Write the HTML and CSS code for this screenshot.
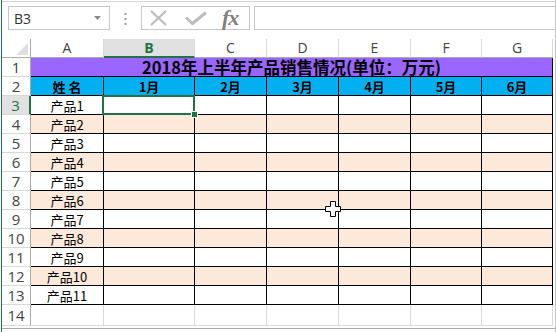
FILE: index.html
```html
<!DOCTYPE html>
<html lang="zh-CN">
<head>
  <meta charset="UTF-8">
  <title>2018年上半年产品销售情况</title>
  <link rel="stylesheet" href="styles.css">
</head>
<body>
  <div class="excel">
    <div class="formula-bar">
      <div class="name-box">
        <span>B3</span>
        <svg class="drop" width="7" height="4" viewBox="0 0 7 4"><path d="M0 0H7L3.5 4Z" fill="#8a8a8a"/></svg>
      </div>
      <svg class="dots" width="3" height="12" viewBox="0 0 3 12">
        <rect x="0.5" y="0" width="2" height="2" fill="#9a9a9a"/>
        <rect x="0.5" y="5" width="2" height="2" fill="#9a9a9a"/>
        <rect x="0.5" y="10" width="2" height="2" fill="#9a9a9a"/>
      </svg>
      <div class="fx-box">
        <svg width="18" height="16" viewBox="0 0 18 16"><path d="M1 1L16 15M16 1L1 15" stroke="#bcbcbc" stroke-width="2.2" fill="none"/></svg>
        <svg width="22" height="14" viewBox="0 0 22 14"><path d="M1 6.5L7.5 12.5L21 1.5" stroke="#bcbcbc" stroke-width="3" fill="none"/></svg>
        <span class="fx">fx</span>
      </div>
      <div class="input-box"></div>
    </div>

    <div class="grid">
      <div class="ch corner"><span class="tri"></span></div>
      <div class="ch">A</div>
      <div class="ch on">B</div>
      <div class="ch">C</div>
      <div class="ch">D</div>
      <div class="ch">E</div>
      <div class="ch">F</div>
      <div class="ch">G</div>

      <div class="rh">1</div>
      <div class="cell title">2018年上半年产品销售情况(单位：万元)</div>

      <div class="rh">2</div>
      <div class="cell head">姓 名</div>
      <div class="cell head">1月</div>
      <div class="cell head">2月</div>
      <div class="cell head">3月</div>
      <div class="cell head">4月</div>
      <div class="cell head">5月</div>
      <div class="cell head">6月</div>

      <div class="rh on">3</div>
      <div class="cell">产品1</div>
      <div class="cell active"><span class="handle"></span></div>
      <div class="cell"></div><div class="cell"></div><div class="cell"></div><div class="cell"></div><div class="cell"></div>

      <div class="rh">4</div>
      <div class="cell peach">产品2</div>
      <div class="cell peach"></div><div class="cell peach"></div><div class="cell peach"></div><div class="cell peach"></div><div class="cell peach"></div><div class="cell peach"></div>

      <div class="rh">5</div>
      <div class="cell">产品3</div>
      <div class="cell"></div><div class="cell"></div><div class="cell"></div><div class="cell"></div><div class="cell"></div><div class="cell"></div>

      <div class="rh">6</div>
      <div class="cell peach">产品4</div>
      <div class="cell peach"></div><div class="cell peach"></div><div class="cell peach"></div><div class="cell peach"></div><div class="cell peach"></div><div class="cell peach"></div>

      <div class="rh">7</div>
      <div class="cell">产品5</div>
      <div class="cell"></div><div class="cell"></div><div class="cell"></div><div class="cell"></div><div class="cell"></div><div class="cell"></div>

      <div class="rh">8</div>
      <div class="cell peach">产品6</div>
      <div class="cell peach"></div><div class="cell peach"></div><div class="cell peach"></div><div class="cell peach"></div><div class="cell peach"></div><div class="cell peach"></div>

      <div class="rh">9</div>
      <div class="cell">产品7</div>
      <div class="cell"></div><div class="cell"></div><div class="cell"></div><div class="cell"></div><div class="cell"></div><div class="cell"></div>

      <div class="rh">10</div>
      <div class="cell peach">产品8</div>
      <div class="cell peach"></div><div class="cell peach"></div><div class="cell peach"></div><div class="cell peach"></div><div class="cell peach"></div><div class="cell peach"></div>

      <div class="rh">11</div>
      <div class="cell">产品9</div>
      <div class="cell"></div><div class="cell"></div><div class="cell"></div><div class="cell"></div><div class="cell"></div><div class="cell"></div>

      <div class="rh">12</div>
      <div class="cell peach">产品10</div>
      <div class="cell peach"></div><div class="cell peach"></div><div class="cell peach"></div><div class="cell peach"></div><div class="cell peach"></div><div class="cell peach"></div>

      <div class="rh">13</div>
      <div class="cell">产品11</div>
      <div class="cell"></div><div class="cell"></div><div class="cell"></div><div class="cell"></div><div class="cell"></div><div class="cell"></div>

      <div class="rh last">14</div>
      <div class="cell empty"></div><div class="cell empty"></div><div class="cell empty"></div><div class="cell empty"></div><div class="cell empty"></div><div class="cell empty"></div><div class="cell empty"></div>
    </div>

    <div class="footer"></div>

    <svg class="cursor" width="16" height="16" viewBox="0 0 16 16">
      <path d="M5.5 0.5H10.5V5.5H15.5V10.5H10.5V15.5H5.5V10.5H0.5V5.5H5.5Z" fill="#fff" stroke="#000" stroke-width="1"/>
    </svg>
  </div>
</body>
</html>
```

FILE: styles.css
```css
body {
  margin: 0;
  background: #fff;
}
.excel {
  position: relative;
  box-sizing: border-box;
  width: 555px;
  height: 332px;
  margin-left: 1px;
  border-left: 1px solid #217346;
  border-right: 1px solid #c6c6c6;
  overflow: hidden;
  font-family: "Open Sans", "Liberation Sans", sans-serif;
}
.formula-bar {
  box-sizing: border-box;
  height: 38px;
  margin-top: 1px;
  border-top: 1px solid #d5d5d5;
  padding-top: 4px;
  display: flex;
  align-items: flex-start;
}
.name-box {
  box-sizing: border-box;
  width: 102px;
  height: 24px;
  margin-left: 6px;
  border: 1px solid #c6c6c6;
  display: flex;
  align-items: center;
  justify-content: space-between;
  padding: 0 8px 0 5px;
  font-size: 14px;
  color: #333;
}
.dots {
  margin: 7px 0 0 14px;
}
.fx-box {
  box-sizing: border-box;
  width: 109px;
  height: 24px;
  margin-left: 14px;
  border: 1px solid #c6c6c6;
  display: flex;
  align-items: center;
  padding-left: 8px;
}
.fx-box svg:nth-child(2) {
  margin-left: 17px;
}
.fx {
  margin-left: 15px;
  font-family: "Liberation Serif", serif;
  font-style: italic;
  font-weight: bold;
  font-size: 22px;
  color: #808080;
  line-height: 20px;
  letter-spacing: -1px;
}
.input-box {
  flex: 1;
  box-sizing: border-box;
  height: 24px;
  margin-left: 4px;
  border: 1px solid #c6c6c6;
  border-right: none;
}
.grid {
  display: grid;
  grid-template-columns: 29px 73px 91px 72px 72px 72px 71px 71px;
  grid-template-rows: 19px repeat(13, 19px) 21px;
}
.ch, .rh, .cell {
  box-sizing: border-box;
  display: flex;
  align-items: center;
  justify-content: center;
}
.ch {
  border-right: 1px solid #d9d9d9;
  border-bottom: 1px solid #ababab;
  font-size: 14px;
  line-height: 16px;
  color: #444;
}
.ch.on {
  background: #e1e1e1;
  border-bottom: 2px solid #217346;
  color: #217346;
  font-weight: bold;
}
.corner {
  position: relative;
  border-right: 1px solid #ababab;
}
.tri {
  position: absolute;
  right: 2px;
  bottom: 2px;
  width: 0;
  height: 0;
  border-left: 12px solid transparent;
  border-bottom: 12px solid #dfdfdf;
}
.rh {
  border-right: 1px solid #ababab;
  border-bottom: 1px solid #d9d9d9;
  font-size: 15px;
  line-height: 17px;
  color: #444;
}
.rh.on {
  background: #e1e1e1;
  border-right: 2px solid #217346;
  color: #217346;
}
.cell {
  border-right: 1px solid #000;
  border-bottom: 1px solid #000;
  font-family: "Noto Sans CJK SC", sans-serif;
  font-size: 13px;
  color: #000;
  line-height: 17px;
}
.title {
  grid-column: 2 / 9;
  background: #9966ff;
  font-size: 16.5px;
  font-weight: bold;
}
.head {
  background: #00b0f0;
  font-weight: bold;
}
.peach {
  background: #fde9d9;
}
.empty {
  border-right: 1px solid #d9d9d9;
  border-bottom: 1px solid #d9d9d9;
}
.active {
  position: relative;
}
.active::after {
  content: "";
  position: absolute;
  left: -2px;
  top: -1px;
  right: -1px;
  bottom: -1px;
  border: 2px solid #217346;
}
.handle {
  position: absolute;
  right: -4px;
  bottom: -4px;
  width: 5px;
  height: 5px;
  background: #217346;
  border: 1px solid #fff;
  z-index: 1;
}
.footer {
  margin-top: 2px;
  border-top: 1px solid #ababab;
}
.cursor {
  position: absolute;
  left: 323px;
  top: 201px;
}
```
